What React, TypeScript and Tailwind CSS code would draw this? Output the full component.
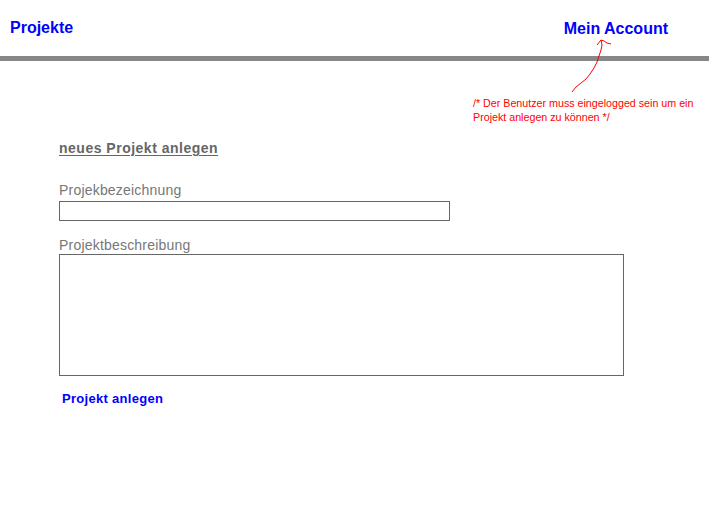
import React from "react";

const arial = { fontFamily: '"Liberation Sans", Arial, sans-serif' };

export default function App() {
  return (
    <div className="relative min-h-[526px] w-[709px] bg-white" style={arial}>
      <header className="flex h-[56px] items-start justify-between pl-[10px] pr-[41px]">
        <a className="mt-[19px] text-[16px] font-bold leading-[18px] text-[#0000ff]">Projekte</a>
        <a className="mt-[20px] text-[16px] font-bold leading-[18px] text-[#0000ff]">Mein Account</a>
      </header>
      <div className="h-[5px] bg-[#878787]" />

      <p className="mt-[35px] pl-[473px] text-[10.7px] leading-[14px] text-[#ff0000]">
        /* Der Benutzer muss eingelogged sein um ein
        <br />
        Projekt anlegen zu können */
      </p>

      <section className="pl-[59px]">
        <h2 className="mt-[16px] text-[14px] font-bold leading-[16px] tracking-[0.5px] text-[#666] underline underline-offset-2">
          neues Projekt anlegen
        </h2>

        <label className="mt-[26px] block text-[14px] leading-[16px] tracking-[0.2px] text-[#777]">
          Projekbezeichnung
        </label>
        <input
          type="text"
          className="mt-[3px] block h-[20px] w-[391px] border border-[#666] bg-white outline-none"
        />

        <label className="mt-[16px] block text-[14px] leading-[16px] tracking-[0.2px] text-[#777]">
          Projektbeschreibung
        </label>
        <textarea className="mt-[1px] block h-[122px] w-[565px] resize-none border border-[#666] bg-white outline-none" />

        <button className="ml-[3px] mt-[15px] block text-[13px] font-bold leading-[16px] tracking-[0.3px] text-[#0000ff]">
          Projekt anlegen
        </button>
      </section>

      {/* hand-drawn annotation arrow */}
      <svg
        className="pointer-events-none absolute left-0 top-0"
        width="709"
        height="526"
        fill="none"
        stroke="#ff0000"
        strokeWidth="1"
      >
        <path d="M572 92 L576 87 L581 83 L586 79 L590 74 L594 68 L597 62 L599 56 L601 50 L602 45 L601 40" />
        <path d="M597 45 L601 40 L604 41 L607 43 L611 44" />
      </svg>
    </div>
  );
}
